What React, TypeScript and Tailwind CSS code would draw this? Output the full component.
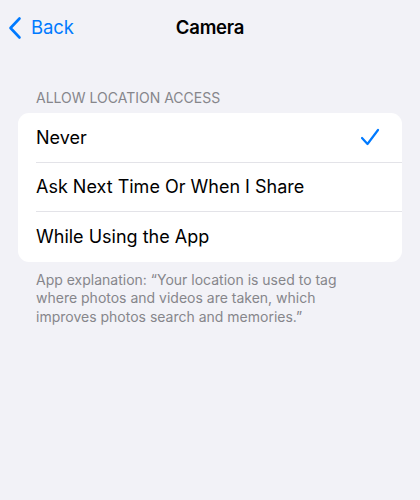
import React from 'react'

const options = ['Never', 'Ask Next Time Or When I Share', 'While Using the App']

const App: React.FC = () => {
  const selected = 0

  return (
    <div className="min-h-[500px] w-full bg-[#f2f2f7] font-['Inter','Noto_Sans',sans-serif] text-black">
      <div className="relative flex h-[54px] items-center px-2 pt-[2px]">
        <button className="flex items-center gap-[9px] text-[#007aff]">
          <svg width="14" height="24" viewBox="0 0 14 24" fill="none">
            <path d="M11.5 2.5L2.5 12l9 9.5" stroke="#007aff" strokeWidth="2.6" strokeLinecap="round" strokeLinejoin="round" />
          </svg>
          <span className="text-[18.5px] tracking-[-0.1px]">Back</span>
        </button>
        <h1 className="absolute left-1/2 -translate-x-1/2 text-[18.5px] font-semibold tracking-[-0.2px]">Camera</h1>
      </div>

      <div className="px-[18px] pt-[35px]">
        <p className="px-[18px] pb-[7px] text-[14px] leading-[17px] text-[#86868b]">
          ALLOW LOCATION ACCESS
        </p>
        <div className="overflow-hidden rounded-[11px] bg-white">
          {options.map((opt, i) => (
            <div
              key={opt}
              className="ml-[18px] flex h-[49.5px] items-center border-[#e3e3e8] pr-[22px] [&:not(:last-child)]:border-b"
            >
              <span className="flex-1 text-[18px]">{opt}</span>
              {i === selected && (
                <svg width="20" height="18" viewBox="0 0 20 18" fill="none">
                  <path d="M2 10l5.5 6L18 2" stroke="#007aff" strokeWidth="2.2" strokeLinecap="round" strokeLinejoin="round" />
                </svg>
              )}
            </div>
          ))}
        </div>
        <p className="pl-[18px] pr-[32px] pt-[9px] text-[14px] leading-[18.5px] text-[#86868b]">
          App explanation: “Your location is used to tag where photos and videos are taken, which improves photos search and memories.”
        </p>
      </div>
    </div>
  )
}

export default App
